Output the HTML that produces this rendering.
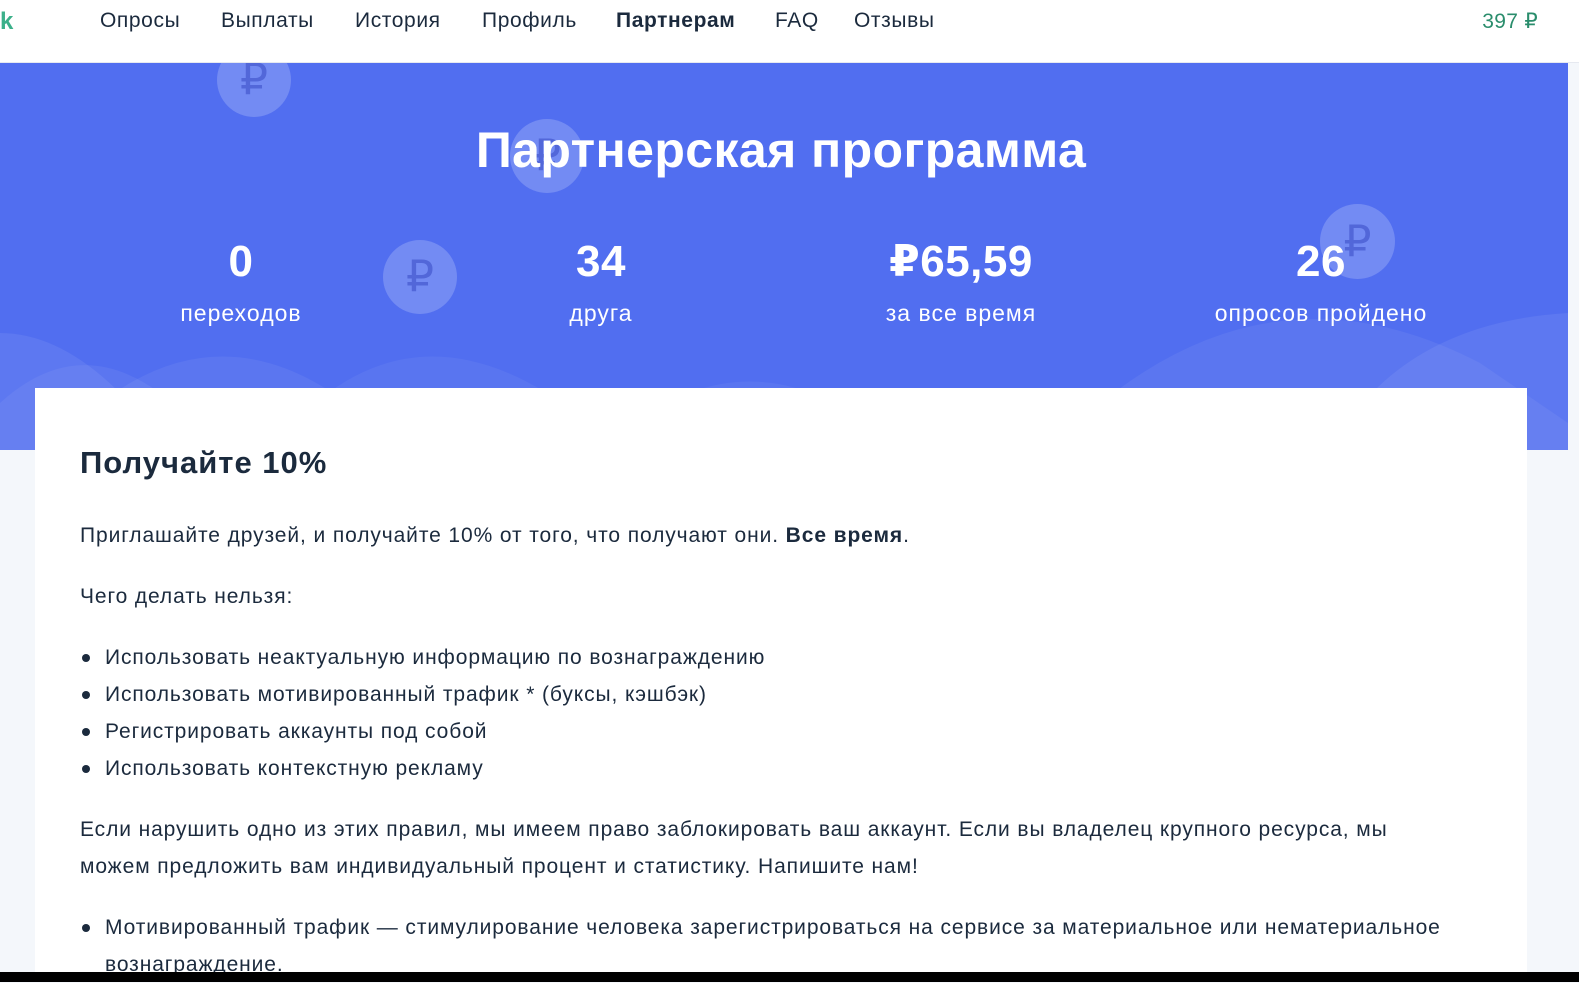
<!DOCTYPE html>
<html><head><meta charset="utf-8"><style>
*{margin:0;padding:0;box-sizing:border-box}
body{width:1579px;height:982px;overflow:hidden;background:#f4f7fb;font-family:"Liberation Sans","DejaVu Sans",sans-serif;color:#1b2a3d;position:relative}
.nav{height:63px;background:#fff;position:relative;border-bottom:1px solid #e6e9f0}
.nav a{position:absolute;top:9px;font-size:21px;color:#1b2a3d;text-decoration:none;letter-spacing:.6px}
.logo{position:absolute;left:0;top:8px;font-size:24px;color:#3cb08a;font-weight:bold}
.bal{position:absolute;right:41px;top:9px;font-size:21px;color:#2a8d6c;letter-spacing:.3px}
.hero{position:absolute;top:63px;left:0;width:1568px;height:387px;background:#516ef0;overflow:hidden}
.hero h1{position:absolute;top:58px;width:100%;text-align:center;font-size:50px;color:#fff;font-weight:bold;left:-3px;letter-spacing:.4px}
.coin{position:absolute;border-radius:50%;background:rgba(255,255,255,.2);color:rgba(60,80,200,.6);text-align:center;font-size:44px}
.stat{position:absolute;top:174px;width:360px;text-align:center;color:#fff}
.stat b{display:block;font-size:44px;line-height:50px;letter-spacing:.5px}
.stat span{display:block;font-size:23px;margin-top:13px;letter-spacing:1px}
.card{position:absolute;top:388px;left:35px;width:1492px;height:590px;background:#fff;padding:57px 45px}
h2{font-size:31px;margin-bottom:36px;letter-spacing:1px}
p{font-size:21px;line-height:37px;margin-bottom:24px;letter-spacing:.9px}
ul{font-size:21px;line-height:37px;margin-bottom:24px;list-style:none;letter-spacing:.9px}
li{position:relative;padding-left:25px}
li::before{content:"";position:absolute;left:2px;top:15px;width:8px;height:8px;border-radius:50%;background:#1b2a3d}
.bar{position:absolute;left:0;top:972px;width:1579px;height:10px;background:#000}
</style></head><body>
<div class="nav">
<div class="logo">k</div>
<a style="left:100px">Опросы</a><a style="left:221px">Выплаты</a><a style="left:355px">История</a><a style="left:482px">Профиль</a><a style="left:616px;font-weight:bold">Партнерам</a><a style="left:775px">FAQ</a><a style="left:854px">Отзывы</a>
<div class="bal">397 ₽</div>
</div>
<div class="hero">
<svg width="1568" height="387" style="position:absolute;left:0;top:0">
<path d="M-50 400 Q50 250 160 330 Q220 390 260 387Z" fill="rgba(255,255,255,.06)"/>
<path d="M50 387 Q220 200 400 387Z" fill="rgba(255,255,255,.06)"/>
<path d="M270 387 Q420 200 620 387Z" fill="rgba(255,255,255,.05)"/>
<path d="M0 387 L0 270 Q60 270 120 330 L180 387Z" fill="rgba(255,255,255,.07)"/>
<path d="M600 387 Q750 250 900 387Z" fill="rgba(255,255,255,.05)"/>
<path d="M1050 387 Q1250 180 1480 300 L1568 360 L1568 387Z" fill="rgba(255,255,255,.06)"/>
<path d="M1330 387 Q1400 260 1568 250 L1568 387Z" fill="rgba(255,255,255,.07)"/>
</svg>
<div class="coin" style="left:217px;top:-20px;width:74px;height:74px;line-height:74px">₽</div>
<div class="coin" style="left:510px;top:56px;width:74px;height:74px;line-height:74px">₽</div>
<div class="coin" style="left:383px;top:177px;width:74px;height:74px;line-height:74px">₽</div>
<div class="coin" style="left:1320px;top:141px;width:75px;height:75px;line-height:75px">₽</div>
<h1>Партнерская программа</h1>
<div class="stat" style="left:61px"><b>0</b><span>переходов</span></div>
<div class="stat" style="left:421px"><b>34</b><span>друга</span></div>
<div class="stat" style="left:781px"><b>₽65,59</b><span>за все время</span></div>
<div class="stat" style="left:1141px"><b>26</b><span>опросов пройдено</span></div>
</div>
<div class="card">
<h2>Получайте 10%</h2>
<p>Приглашайте друзей, и получайте 10% от того, что получают они. <b>Все время</b>.</p>
<p>Чего делать нельзя:</p>
<ul><li>Использовать неактуальную информацию по вознаграждению</li><li>Использовать мотивированный трафик * (буксы, кэшбэк)</li><li>Регистрировать аккаунты под собой</li><li>Использовать контекстную рекламу</li></ul>
<p>Если нарушить одно из этих правил, мы имеем право заблокировать ваш аккаунт. Если вы владелец крупного ресурса, мы<br>можем предложить вам индивидуальный процент и статистику. Напишите нам!</p>
<ul><li>Мотивированный трафик — стимулирование человека зарегистрироваться на сервисе за материальное или нематериальное<br>вознаграждение.</li></ul>
</div>
<div class="bar"></div>
</body></html>
